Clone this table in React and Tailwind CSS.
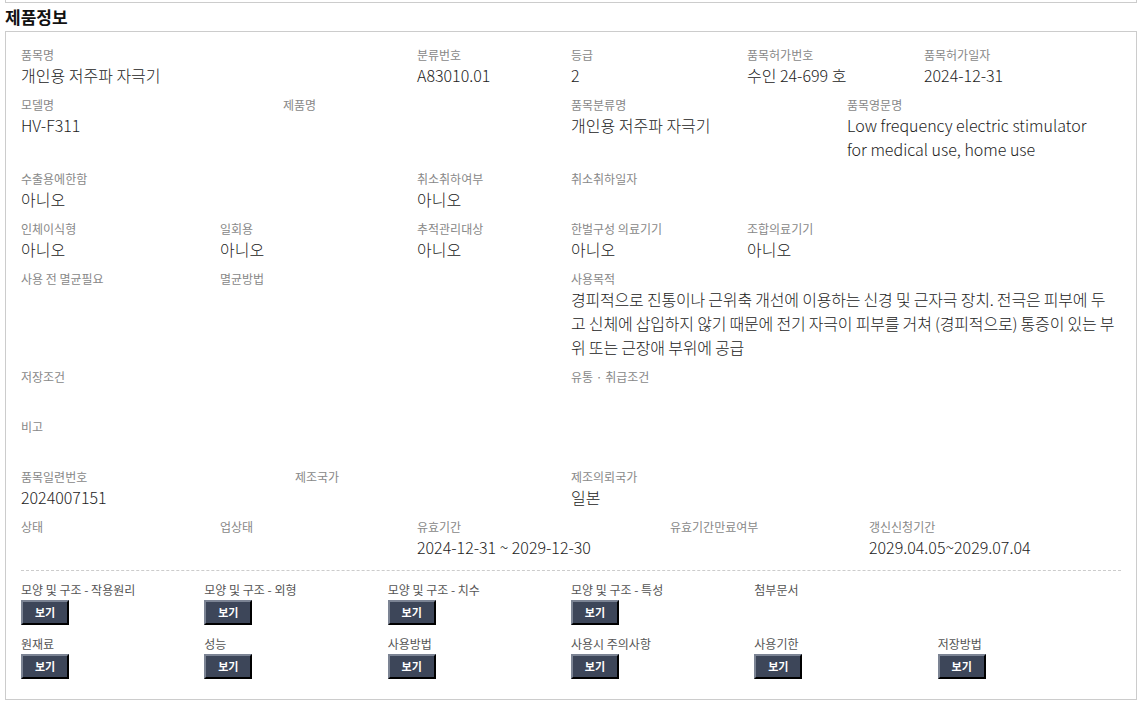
import React from 'react';

const rows = [
    [
        { label: '품목명', value: '개인용 저주파 자극기', w: 'w-[396px]' },
        { label: '분류번호', value: 'A83010.01', w: 'w-[154px]' },
        { label: '등급', value: '2', w: 'w-[176px]' },
        { label: '품목허가번호', value: '수인 24-699 호', w: 'w-[177px]' },
        { label: '품목허가일자', value: '2024-12-31', w: 'flex-1' },
    ],
    [
        { label: '모델명', value: 'HV-F311', w: 'w-[262px]' },
        { label: '제품명', value: '', w: 'w-[288px]' },
        { label: '품목분류명', value: '개인용 저주파 자극기', w: 'w-[276px]' },
        { label: '품목영문명', value: 'Low frequency electric stimulator for medical use, home use', w: 'flex-1', pad: 'pr-[20px]' },
    ],
    [
        { label: '수출용에한함', value: '아니오', w: 'w-[396px]' },
        { label: '취소취하여부', value: '아니오', w: 'w-[154px]' },
        { label: '취소취하일자', value: '', w: 'flex-1' },
    ],
    [
        { label: '인체이식형', value: '아니오', w: 'w-[199px]' },
        { label: '일회용', value: '아니오', w: 'w-[197px]' },
        { label: '추적관리대상', value: '아니오', w: 'w-[154px]' },
        { label: '한벌구성 의료기기', value: '아니오', w: 'w-[176px]' },
        { label: '조합의료기기', value: '아니오', w: 'flex-1' },
    ],
    [
        { label: '사용 전 멸균필요', value: '', w: 'w-[199px]' },
        { label: '멸균방법', value: '', w: 'w-[351px]' },
        {
            label: '사용목적',
            value: '경피적으로 진통이나 근위축 개선에 이용하는 신경 및 근자극 장치. 전극은 피부에 두고 신체에 삽입하지 않기 때문에 전기 자극이 피부를 거쳐 (경피적으로) 통증이 있는 부위 또는 근장애 부위에 공급',
            w: 'flex-1',
            pad: 'pr-[4px]',
            tight: true,
        },
    ],
    [
        { label: '저장조건', value: '', w: 'w-[550px]' },
        { label: '유통 · 취급조건', value: '', w: 'flex-1' },
    ],
    [{ label: '비고', value: '', w: 'flex-1' }],
    [
        { label: '품목일련번호', value: '2024007151', w: 'w-[274px]' },
        { label: '제조국가', value: '', w: 'w-[276px]' },
        { label: '제조의뢰국가', value: '일본', w: 'flex-1' },
    ],
    [
        { label: '상태', value: '', w: 'w-[199px]' },
        { label: '업상태', value: '', w: 'w-[197px]' },
        { label: '유효기간', value: '2024-12-31 ~ 2029-12-30', w: 'w-[253px]' },
        { label: '유효기간만료여부', value: '', w: 'w-[199px]' },
        { label: '갱신신청기간', value: '2029.04.05~2029.07.04', w: 'flex-1' },
    ],
];

const docRows = [
    ['모양 및 구조 - 작용원리', '모양 및 구조 - 외형', '모양 및 구조 - 치수', '모양 및 구조 - 특성', '첨부문서', null],
    ['원재료', '성능', '사용방법', '사용시 주의사항', '사용기한', '저장방법'],
];

const Field = ({ label, value, w, pad = 'pr-2', tight }) => (
    <div className={`${w} ${pad} pb-[10px]`}>
        <div className="text-[12px] leading-4 text-[#888]">{label}</div>
        <div className={`text-[16px] leading-[24px] min-h-[24px] text-[#222] font-light ${tight ? 'tracking-[-0.2px]' : ''}`}>
            {value}
        </div>
    </div>
);

const App = () => {
    return (
        <div className="ml-[5px] w-[1132px] bg-white" style={{ fontFamily: '"Noto Sans CJK KR", "Noto Sans", sans-serif' }}>
            {/* bottom edge of the previous panel */}
            <div className="h-[3px] border border-t-0 border-[#ccc]"></div>
            <h2 className="h-[28px] flex items-center text-[17px] font-bold text-[#111]">제품정보</h2>

            <div className="border border-[#ccc] px-[15px] pt-[15px] pb-[9px]">
                {rows.map((row, i) => (
                    <div key={i} className="flex">
                        {row.map((f) => (
                            <Field key={f.label} {...f} />
                        ))}
                    </div>
                ))}

                <div className="border-t border-dashed border-[#ccc] mt-px mb-[11px]"></div>

                {docRows.map((row, i) => (
                    <div key={i} className="grid grid-cols-6 pb-[10px] mb-px">
                        {row.map((label, j) => (
                            <div key={j}>
                                {label && (
                                    <>
                                        <div className="text-[12px] leading-4 text-[#555]">{label}</div>
                                        {label !== '첨부문서' && (
                                            <button className="mt-[2px] w-[48px] h-[25px] bg-[#3d4659] text-white text-[11px] font-bold border-2 border-t-[#7c8494] border-l-[#7c8494] border-r-black border-b-black">
                                                보기
                                            </button>
                                        )}
                                    </>
                                )}
                            </div>
                        ))}
                    </div>
                ))}
            </div>
        </div>
    );
};

export default App;
